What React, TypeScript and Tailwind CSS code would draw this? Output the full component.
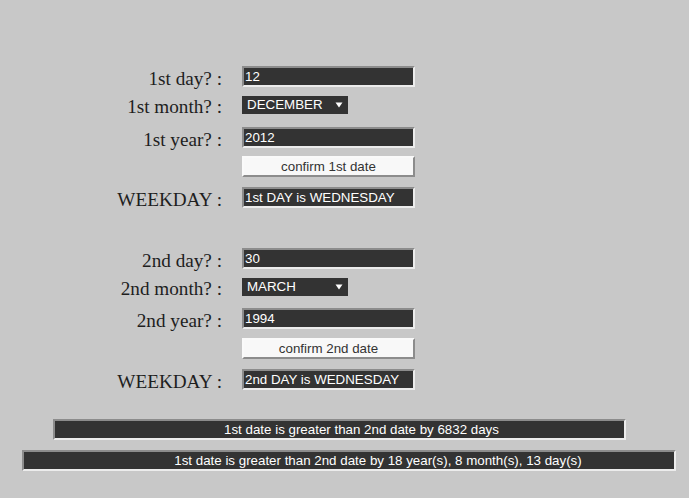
import React from 'react';

const serif = { fontFamily: '"Liberation Serif", "Times New Roman", serif' };

const Label = ({ children }: { children: React.ReactNode }) => (
  <div className="w-[222px] shrink-0 translate-y-[2px] text-right text-[19.2px] leading-[18px] text-[#1e1e1e]" style={serif}>
    {children}
  </div>
);

const Field = ({ value }: { value: string }) => (
  <div className="box-border flex h-[21px] w-[173px] items-center border-2 border-t-[#8c8c8c] border-l-[#8c8c8c] border-b-[#ececec] border-r-[#ececec] bg-[#333] px-[1px] text-[13.33px] text-white">
    {value}
  </div>
);

const Month = ({ value }: { value: string }) => (
  <div className="box-border flex h-[18px] w-[106px] items-center justify-between bg-[#333] pl-[5px] pr-[4px] text-[13.33px] text-white">
    <span>{value}</span>
    <svg width="8" height="6" viewBox="0 0 8 6" className="mr-[1px]">
      <path d="M0.5 0.5 H7.5 L4 5.5 Z" fill="#fff" />
    </svg>
  </div>
);

const Confirm = ({ label }: { label: string }) => (
  <button className="box-border flex h-[21px] w-[173px] items-center justify-center border-2 border-t-[#fafafa] border-l-[#fafafa] border-b-[#8c8c8c] border-r-[#8c8c8c] bg-[#f8f8f8] text-[13.33px] text-[#333]">
    {label}
  </button>
);

const Row = ({ label, children, mt }: { label?: string; children: React.ReactNode; mt: string }) => (
  <div className={`flex items-center gap-[20px] ${mt}`}>
    <Label>{label}</Label>
    {children}
  </div>
);

const Bar = ({ text, className }: { text: string; className: string }) => (
  <div
    className={`box-border flex h-[21px] items-center justify-center border-2 border-t-[#8c8c8c] border-l-[#8c8c8c] border-b-[#ececec] border-r-[#ececec] bg-[#333] text-[13.33px] text-white ${className}`}
  >
    {text}
  </div>
);

export default function App() {
  return (
    <div
      className="flex min-h-screen w-full flex-col bg-[#c8c8c8] pt-[66px]"
      style={{ fontFamily: '"Liberation Sans", Arial, sans-serif' }}
    >
      <Row label="1st day? :" mt="mt-0"><Field value="12" /></Row>
      <Row label="1st month? :" mt="mt-[9px]"><Month value="DECEMBER" /></Row>
      <Row label="1st year? :" mt="mt-[13px]"><Field value="2012" /></Row>
      <Row mt="mt-[8px]"><Confirm label="confirm 1st date" /></Row>
      <Row label="WEEKDAY :" mt="mt-[10px]"><Field value="1st DAY is WEDNESDAY" /></Row>

      <Row label="2nd day? :" mt="mt-[40px]"><Field value="30" /></Row>
      <Row label="2nd month? :" mt="mt-[9px]"><Month value="MARCH" /></Row>
      <Row label="2nd year? :" mt="mt-[12px]"><Field value="1994" /></Row>
      <Row mt="mt-[9px]"><Confirm label="confirm 2nd date" /></Row>
      <Row label="WEEKDAY :" mt="mt-[10px]"><Field value="2nd DAY is WEDNESDAY" /></Row>

      <Bar
        text="1st date is greater than 2nd date by 6832 days"
        className="ml-[53px] mt-[29px] w-[573px] pl-[44px]"
      />
      <Bar
        text="1st date is greater than 2nd date by 18 year(s), 8 month(s), 13 day(s)"
        className="ml-[22px] mt-[10px] w-[654px] pl-[58px]"
      />
    </div>
  );
}
